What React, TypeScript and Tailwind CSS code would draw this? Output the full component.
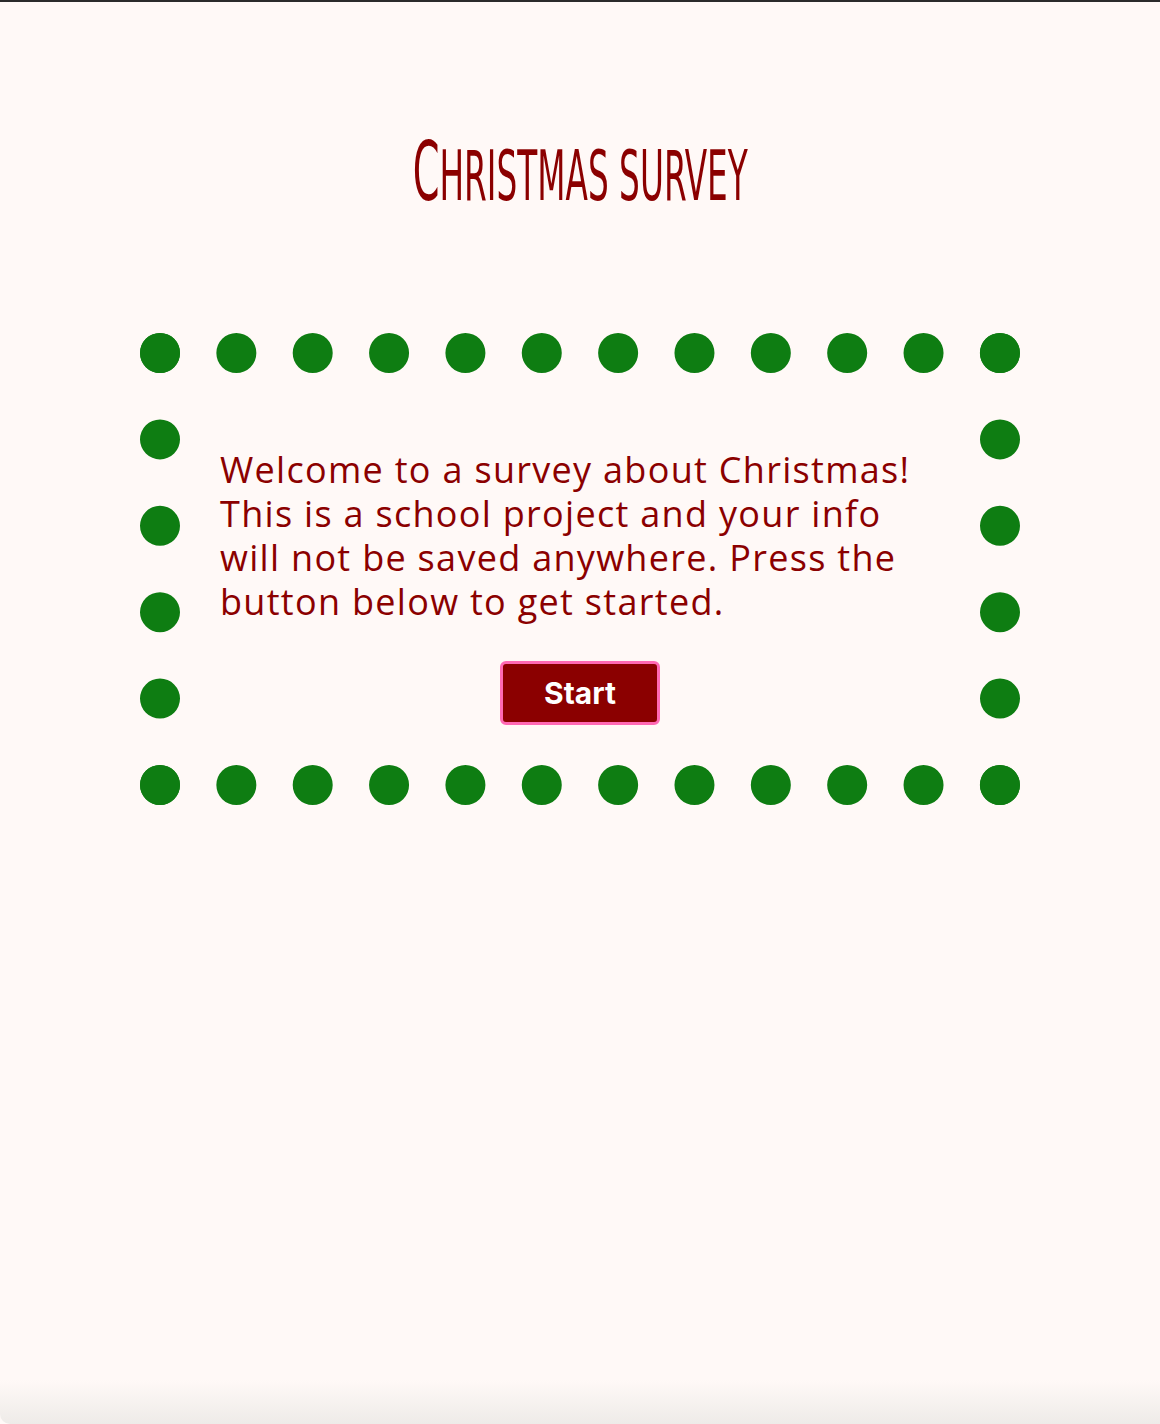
export default function App() {
  return (
    <main className="min-h-[1424px] flex flex-col bg-[#fff9f7]">
      {/* window frame edge */}
      <div className="h-[2px] bg-[#2b2b2b]"></div>

      <header className="pt-[120px] flex justify-center">
        <h1
          className="text-[#8b0000] text-[70px] leading-[100px] uppercase scale-x-[0.52] whitespace-nowrap"
          style={{ fontFamily: '"Liberation Sans Narrow", "DejaVu Sans Condensed", "Liberation Sans", sans-serif' }}
        >
          <span className="text-[82px]">C</span>hristmas survey
        </h1>
      </header>

      <section className="mt-[107px] mx-[140px] border-[40px] border-dotted border-[#0e7d12] px-10 pt-[75px] pb-10 flex flex-col items-center">
        <p
          className="self-stretch text-[#8b0000] text-[36px] leading-[44px] tracking-[1.3px]"
          style={{ fontFamily: '"Open Sans", sans-serif' }}
        >
          Welcome to a survey about Christmas!
          <br />
          This is a school project and your info
          <br />
          will not be saved anywhere. Press the
          <br />
          button below to get started.
        </p>
        <button
          className="mt-[37px] w-[160px] h-[64px] rounded-md border-[3px] border-[#ff69b4] bg-[#8b0000] text-white text-[30px] font-bold"
          style={{ fontFamily: 'Inter, "Liberation Sans", sans-serif' }}
        >
          Start
        </button>
      </section>

      <div className="flex-1"></div>
      <div className="h-[44px] rounded-bl-[10px] bg-gradient-to-b from-[#fff9f7] to-[#eeebe8]"></div>
    </main>
  );
}
